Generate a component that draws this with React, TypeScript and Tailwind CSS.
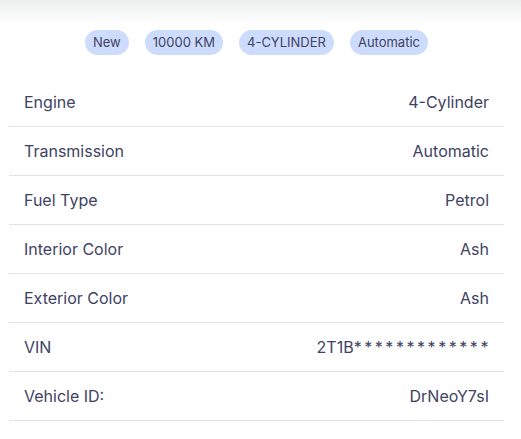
const badges = ["New", "10000 KM", "4-CYLINDER", "Automatic"];

const specs = [
  { label: "Engine", value: "4-Cylinder" },
  { label: "Transmission", value: "Automatic" },
  { label: "Fuel Type", value: "Petrol" },
  { label: "Interior Color", value: "Ash" },
  { label: "Exterior Color", value: "Ash" },
  { label: "VIN", value: "2T1B", masked: "*************" },
  { label: "Vehicle ID:", value: "DrNeoY7sI" },
];

export default function App() {
  return (
    <div className="w-[521px] h-[439px] bg-white overflow-hidden font-['Inter',sans-serif] text-[#404262]">
      <div className="h-[24px] bg-gradient-to-b from-[#eceeee] to-white" />
      <div className="pl-[9px] pr-[17px]">
        <div className="flex justify-center gap-4 mt-[6px]">
          {badges.map((b) => (
            <span
              key={b}
              className="h-[25px] px-[8px] flex items-center rounded-full bg-[#cddcfd] text-[13px] text-[#404262]"
            >
              {b}
            </span>
          ))}
        </div>
        <div className="mt-[23px]">
          {specs.map((s) => (
            <div
              key={s.label}
              className="h-[49px] flex items-center justify-between px-[15px] border-b border-[#e2e2e2] text-[16px]"
            >
              <span>{s.label}</span>
              <span>
                {s.value}
                {s.masked && <span className="tracking-[2.55px] mr-[-2px]">{s.masked}</span>}
              </span>
            </div>
          ))}
        </div>
      </div>
    </div>
  );
}
